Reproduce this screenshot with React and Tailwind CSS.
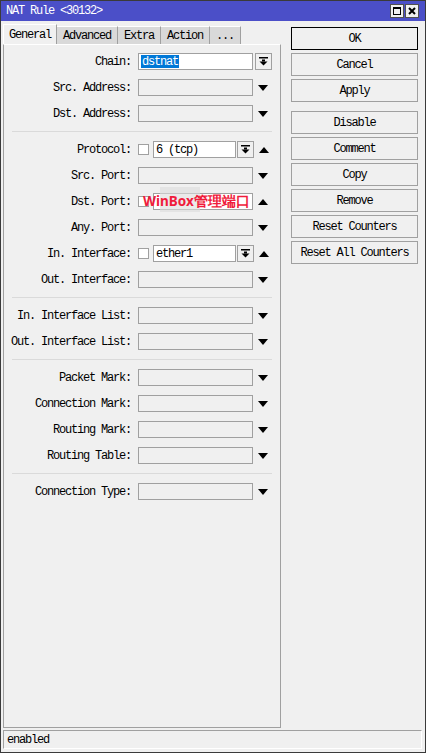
import React from 'react';

const Tri = ({ up }) => (
  <svg width="10" height="6" viewBox="0 0 10 6" className="block">
    {up ? <polygon points="0,6 10,6 5,0" fill="#000" /> : <polygon points="0,0 10,0 5,6" fill="#000" />}
  </svg>
);

const DropIcon = () => (
  <svg width="9" height="9" viewBox="0 0 9 9" className="block">
    <rect x="0" y="0" width="9" height="1.5" fill="#000" />
    <rect x="3" y="2.5" width="3" height="2" fill="#000" />
    <polygon points="0.5,4.5 8.5,4.5 4.5,8.5" fill="#000" />
  </svg>
);

const Label = ({ children }) => (
  <div className="w-[128px] text-right pr-[1px] whitespace-pre">{children}</div>
);

const Box = ({ white, className = '', children }) => (
  <div className={`h-[17px] border border-[#a0a0a0] flex items-center pl-[2px] ${white ? 'bg-white' : 'bg-[#f0f0f0]'} ${className}`}>
    {children}
  </div>
);

const DropBtn = ({ className = '' }) => (
  <div className={`h-[17px] w-[17px] border border-[#a0a0a0] bg-[#f0f0f0] flex items-center justify-center ${className}`}>
    <DropIcon />
  </div>
);

const Check = () => (
  <div className="w-[11px] h-[11px] border border-[#a0a0a0] bg-white shrink-0" />
);

const Row = ({ label, children, arrow = 'down', last }) => (
  <div className={`flex items-center h-[17px] ${last ? '' : 'mb-[9px]'}`}>
    <Label>{label}</Label>
    <div className="ml-[6px] flex items-center">{children}</div>
    {arrow && (
      <div className="ml-[5px] w-[10px]">
        <Tri up={arrow === 'up'} />
      </div>
    )}
  </div>
);

const Sep = () => <div className="h-px bg-[#dadada] mx-[8px] mt-[1px] mb-[9px]" />;

const tabs = ['General', 'Advanced', 'Extra', 'Action', '...'];
const buttons = [
  ['OK'], ['Cancel'], ['Apply'], null, ['Disable'], ['Comment'], ['Copy'], ['Remove'], ['Reset Counters'], ['Reset All Counters']
];

export default function App() {
  return (
    <div className="w-[426px] h-[753px] bg-[#f0f0f0] border border-[#3a3a3a] flex flex-col overflow-hidden text-black font-mono text-[12px] tracking-[-1.2px] leading-none">
      {/* title bar */}
      <div className="h-[20px] bg-[#4b4fc8] flex items-center justify-between pl-[5px] pr-[6px] shrink-0">
        <span className="text-white">NAT Rule &lt;30132&gt;</span>
        <div className="flex gap-[1px]">
          <div className="w-[14px] h-[14px] bg-[#f0f0f0] border border-[#505050] flex items-center justify-center">
            <div className="w-[8px] h-[8px] border border-black border-t-2" />
          </div>
          <div className="w-[14px] h-[14px] bg-[#f0f0f0] border border-[#505050] flex items-center justify-center">
            <svg width="8" height="8" viewBox="0 0 8 8">
              <path d="M1 1 L7 7 M7 1 L1 7" stroke="#000" strokeWidth="2" />
            </svg>
          </div>
        </div>
      </div>

      <div className="flex flex-1 min-h-0">
        {/* left: tabs + panel */}
        <div className="w-[280px] pl-[2px] pt-[3px] flex flex-col">
          <div className="flex h-[20px] items-end">
            {tabs.map((t, i) => (
              <div
                key={t}
                className={
                  i === 0
                    ? 'h-[20px] px-[5px] pt-[4px] bg-[#f0f0f0] border-t border-l border-white border-r border-r-[#a0a0a0]'
                    : 'h-[18px] px-[6px] pt-[3px] bg-[#d9d9d9] border-t border-white border-r border-r-[#a0a0a0]'
                }
              >
                {t}
              </div>
            ))}
          </div>
          <div className="flex-1 border-l border-b border-r border-[#a0a0a0] border-t border-t-white pt-[8px]">
            <Row label="Chain:" arrow={null}>
              <Box white className="w-[115px]">
                <span className="bg-[#0078d7] text-white px-[1px] h-[13px] flex items-center">dstnat</span>
              </Box>
              <DropBtn className="ml-[2px]" />
            </Row>
            <Row label="Src. Address:"><Box className="w-[115px]" /></Row>
            <Row label="Dst. Address:"><Box className="w-[115px]" /></Row>
            <Sep />
            <Row label="Protocol:" arrow="up">
              <Check />
              <Box white className="w-[83px] ml-[4px]">6 (tcp)</Box>
              <DropBtn className="ml-[1px]" />
            </Row>
            <Row label="Src. Port:"><Box className="w-[115px]" /></Row>
            <Row label="Dst. Port:" arrow="up">
              <Check />
              <div className="relative ml-[4px]">
                <Box white className="w-[100px]" />
                <div className="absolute left-[7px] top-[-6px] w-[40px] h-[25px] bg-[#dcdcdc] opacity-60" />
                <span className="absolute left-[-10px] top-[-1px] whitespace-nowrap tracking-normal font-bold text-[13.5px] leading-[18px] text-[#f01c3c] font-sans">
                  WinBox管理端口
                </span>
              </div>
            </Row>
            <Row label="Any. Port:"><Box className="w-[115px]" /></Row>
            <Row label="In. Interface:" arrow="up">
              <Check />
              <Box white className="w-[83px] ml-[4px]">ether1</Box>
              <DropBtn className="ml-[1px]" />
            </Row>
            <Row label="Out. Interface:"><Box className="w-[115px]" /></Row>
            <Sep />
            <Row label="In. Interface List:"><Box className="w-[115px]" /></Row>
            <Row label="Out. Interface List:"><Box className="w-[115px]" /></Row>
            <Sep />
            <Row label="Packet Mark:"><Box className="w-[115px]" /></Row>
            <Row label="Connection Mark:"><Box className="w-[115px]" /></Row>
            <Row label="Routing Mark:"><Box className="w-[115px]" /></Row>
            <Row label="Routing Table:"><Box className="w-[115px]" /></Row>
            <Sep />
            <Row label="Connection Type:" last><Box className="w-[115px]" /></Row>
          </div>
        </div>

        {/* right: buttons */}
        <div className="pl-[10px] pt-[6px] flex flex-col">
          {buttons.map((b, i) =>
            b === null ? (
              <div key={i} className="h-[6px]" />
            ) : (
              <div
                key={i}
                className={`w-[127px] h-[23px] mb-[3px] flex items-center justify-center bg-[#f0f0f0] border ${
                  i === 0 ? 'border-black' : 'border-[#a0a0a0]'
                }`}
              >
                {b[0]}
              </div>
            )
          )}
        </div>
      </div>

      {/* status bar */}
      <div className="mt-[2px] mb-[3px] ml-[2px] mr-[3px] h-[19px] border border-[#a0a0a0] border-r-white border-b-white flex items-center pl-[3px] shrink-0">
        enabled
      </div>
    </div>
  );
}
